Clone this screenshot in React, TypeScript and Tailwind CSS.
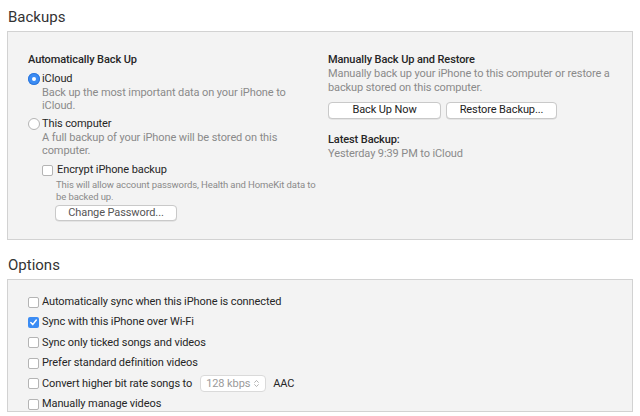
import { ChevronsUpDown } from "lucide-react";

function Radio({ checked }: { checked?: boolean }) {
  return checked ? (
    <span className="flex h-[12px] w-[12px] shrink-0 items-center justify-center rounded-full bg-[#3b8cf4] shadow-[inset_0_0_0_1px_#2f78dc]">
      <span className="h-[4px] w-[4px] rounded-full bg-white" />
    </span>
  ) : (
    <span className="h-[12px] w-[12px] shrink-0 rounded-full border border-[#b4b4b4] bg-white" />
  );
}

function Check({ checked }: { checked?: boolean }) {
  return checked ? (
    <span className="flex h-[11px] w-[11px] shrink-0 items-center justify-center rounded-[2px] bg-[#3b8cf4]">
      <svg width="9" height="9" viewBox="0 0 9 9" fill="none">
        <path d="M1.8 4.6 L3.7 6.6 L7.3 2" stroke="white" strokeWidth="1.5" strokeLinecap="round" strokeLinejoin="round" />
      </svg>
    </span>
  ) : (
    <span className="h-[11px] w-[11px] shrink-0 rounded-[2px] border border-[#b4b4b4] bg-white" />
  );
}

function Button({ label, className }: { label: string; className: string }) {
  return (
    <button className={`flex items-center justify-center rounded-[4px] border border-[#c9c9c9] bg-white text-[11px] text-[#222] shadow-[0_0.5px_0.5px_rgba(0,0,0,0.12)] ${className}`}>
      {label}
    </button>
  );
}

function OptionRow({ label, checked, children }: { label: string; checked?: boolean; children?: React.ReactNode }) {
  return (
    <div className="flex h-[20.4px] items-center gap-[3px]">
      <Check checked={checked} />
      <span>{label}</span>
      {children}
    </div>
  );
}

export default function App() {
  return (
    <div className="h-[416px] w-[640px] overflow-hidden bg-white px-[7px] font-[Roboto,sans-serif] text-[11px] tracking-[-0.1px] text-[#262626]">
      <h2 className="flex h-[31px] items-center pl-[1px] pt-[4px] text-[15px] tracking-normal text-[#333]">Backups</h2>
      <div className="flex h-[209px] w-[626px] border border-[#d2d2d2] bg-[#f3f3f3] pt-[21px]">
        <div className="w-[320px] shrink-0 pl-[20px]">
          <div className="leading-[14px] font-medium">Automatically Back Up</div>
          <div className="mt-[5px] flex h-[14px] items-center gap-[2px]">
            <Radio checked />
            <span>iCloud</span>
          </div>
          <div className="pl-[14px] leading-[13px] text-[#8a8a8a]">
            Back up the most important data on your iPhone to
            <br />
            iCloud.
          </div>
          <div className="mt-[5px] flex h-[14px] items-center gap-[2px]">
            <Radio />
            <span>This computer</span>
          </div>
          <div className="pl-[14px] leading-[13px] text-[#8a8a8a]">
            A full backup of your iPhone will be stored on this
            <br />
            computer.
          </div>
          <div className="mt-[6px] flex h-[14px] items-center gap-[4px] pl-[14px]">
            <Check />
            <span>Encrypt iPhone backup</span>
          </div>
          <div className="mt-[2px] whitespace-nowrap pl-[28px] text-[9.5px] leading-[12px] text-[#8a8a8a]">
            This will allow account passwords, Health and HomeKit data to
            <br />
            be backed up.
          </div>
          <div className="mt-[2px] pl-[27px]">
            <Button label="Change Password..." className="h-[16px] w-[122px] text-[#555]" />
          </div>
        </div>
        <div>
          <div className="leading-[14px] font-medium">Manually Back Up and Restore</div>
          <div className="leading-[13.5px] text-[#8a8a8a]">
            Manually back up your iPhone to this computer or restore a
            <br />
            backup stored on this computer.
          </div>
          <div className="mt-[8px] flex gap-[5px]">
            <Button label="Back Up Now" className="h-[17px] w-[113px]" />
            <Button label="Restore Backup..." className="h-[17px] w-[111px]" />
          </div>
          <div className="mt-[14px] leading-[14px] font-medium">Latest Backup:</div>
          <div className="leading-[13px] text-[#8a8a8a]">Yesterday 9:39 PM to iCloud</div>
        </div>
      </div>
      <h2 className="flex h-[39px] items-center pl-[1px] pt-[12px] text-[15px] tracking-normal text-[#333]">Options</h2>
      <div className="h-[133px] w-[626px] border border-[#d2d2d2] bg-[#f3f3f3] pl-[20px] pt-[12px]">
        <OptionRow label="Automatically sync when this iPhone is connected" />
        <OptionRow label="Sync with this iPhone over Wi-Fi" checked />
        <OptionRow label="Sync only ticked songs and videos" />
        <OptionRow label="Prefer standard definition videos" />
        <OptionRow label="Convert higher bit rate songs to">
          <span className="ml-[5px] flex h-[17px] w-[66px] items-center justify-between rounded-[4px] border border-[#dadada] bg-white pl-[5px] pr-[4px] text-[#9a9a9a]">
            128 kbps
            <ChevronsUpDown size={9} strokeWidth={2} />
          </span>
          <span className="ml-[4px]">AAC</span>
        </OptionRow>
        <OptionRow label="Manually manage videos" />
      </div>
    </div>
  );
}
